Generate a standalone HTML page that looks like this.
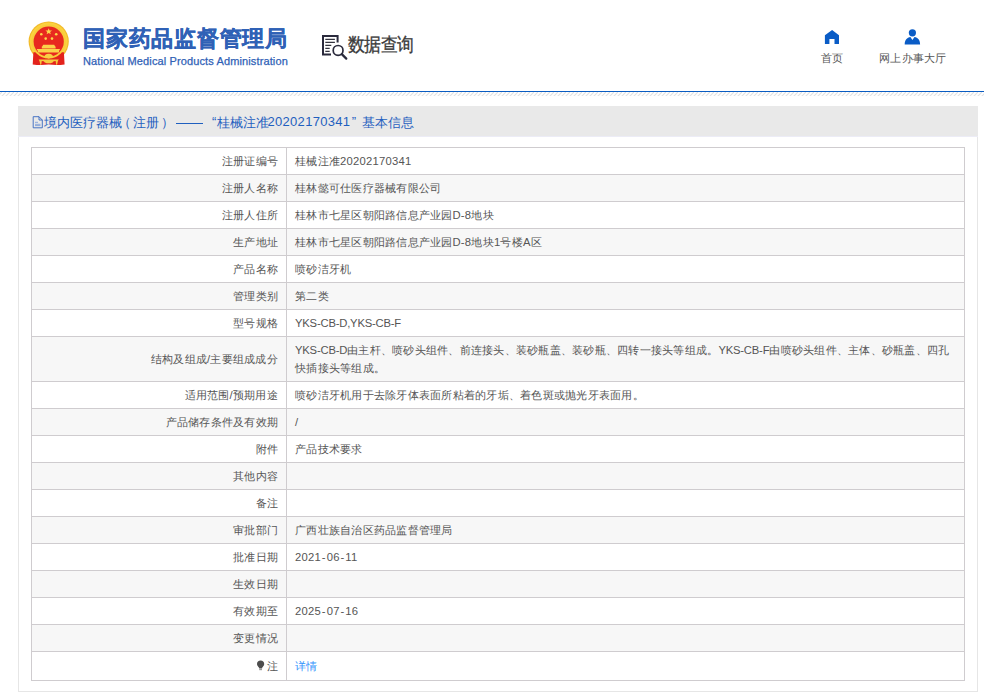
<!DOCTYPE html>
<html><head><meta charset="utf-8">
<style>
*{margin:0;padding:0;box-sizing:border-box}
html,body{width:984px;height:699px;overflow:hidden;background:#fff;font-family:"Liberation Sans",sans-serif;color:#555}
.abs{position:absolute}
.s{position:absolute;white-space:nowrap}
#bl{position:absolute;left:0;top:91px;width:984px;height:1px;background:#0a5cc2}
#hatch{position:absolute;left:0;top:92px;width:984px;height:4px}
.t1{left:83px;top:24px;font-size:22px;font-weight:bold;color:#2f61b6;letter-spacing:.75px;-webkit-text-stroke:.3px #2f61b6}
.t2{left:83px;top:55px;font-size:11px;color:#2f61b6;letter-spacing:.125px;-webkit-text-stroke:.25px #2f61b6}
.dq{left:348px;top:32px;font-size:17px;color:#3a3a3a;letter-spacing:-.6px;transform:scaleY(1.13);transform-origin:0 3px;-webkit-text-stroke:.3px #3a3a3a}
.nav{font-size:11.25px;letter-spacing:.25px;color:#555}
#panel{position:absolute;left:18px;top:106px;width:960px;height:586px;border:1px solid #e6e6e6;border-top:none}
#ph{position:absolute;left:18px;top:106px;width:960px;height:31px;background:#e9e9e9;border-bottom:1px solid #ececf6}
.pt{top:114px;font-size:13px;color:#1f5fbf}
table{position:absolute;left:31px;top:147px;width:934px;border-collapse:collapse;font-size:11.25px;letter-spacing:.25px;color:#555}
td{border:1px solid #cfcccf;height:27px;padding:0;vertical-align:middle;white-space:nowrap}
td.l{width:255px;text-align:right;padding-right:8px}
td.v{padding-left:8px;line-height:18px}
tr.g td{background:#f7f7f7}
.n{letter-spacing:-.2px}
.h{margin:0 .8px}
a{color:#3394fc;text-decoration:none}
</style></head><body>
<svg class="abs" style="left:20px;top:15px" width="70" height="60" viewBox="20 15 70 60">
  <circle cx="48.7" cy="41.5" r="20.1" fill="#f2b928"/>
  <circle cx="48.7" cy="41.5" r="19" fill="#fbd13e"/>
  <path d="M33.4 52.2 L32.7 64.4 Q40 65.6 48.7 64.6 Q57.4 65.6 64.6 64.4 L63.9 52.2 Z" fill="#e3231c"/>
  <circle cx="48.7" cy="41.5" r="17.1" fill="#f8cc3a"/>
  <circle cx="48.7" cy="41.6" r="15.1" fill="#e8291f"/>
  <polygon points="48.7,28.2 49.6,30.4 52,30.5 50.1,32 50.8,34.3 48.7,33 46.6,34.3 47.3,32 45.4,30.5 47.8,30.4" fill="#fcd84a"/>
  <circle cx="41.3" cy="34.3" r="1.3" fill="#fcd84a"/>
  <circle cx="56.2" cy="34.3" r="1.3" fill="#fcd84a"/>
  <circle cx="45.7" cy="38.6" r="1.3" fill="#fcd84a"/>
  <circle cx="52.0" cy="38.6" r="1.3" fill="#fcd84a"/>
  <path d="M43.2 44.7 H54.2 L55.2 46.6 H42.2 Z M41.8 46.6 H55.6 V48.4 H41.8Z M36.7 49 H60 L59.4 50.6 H37.3Z M38 50.6 H59 V52.4 H38Z" fill="#fbd24a"/>
  <path d="M44.3 56.6 Q45.3 53.6 48.7 53.8 Q52.1 53.6 53.1 56.6 Q50.7 58.5 48.7 58.4 Q46.7 58.5 44.3 56.6Z" fill="#f8cf45"/>
  <path d="M38.6 59.6 L58.8 59.6 L57.6 61.2 Q53.4 60.7 52.6 62.4 Q48.7 64.3 44.8 62.4 Q44 60.7 39.8 61.2 Z" fill="#f6cb40"/>
  <path d="M39.4 60.2 L41.9 60.2 L41.2 64.8 L40.3 64.8 Z M58 60.2 L55.5 60.2 L56.2 64.8 L57.1 64.8 Z" fill="#f3c63e"/>
</svg>
<div class="s t1">国家药品监督管理局</div>
<div class="s t2">National Medical Products Administration</div>
<svg class="abs" style="left:318px;top:30px" width="34" height="32" viewBox="0 0 34 32">
  <path d="M13 24.6 H5 V5.9 H19.6 V12.4" fill="none" stroke="#2a2a3c" stroke-width="2"/>
  <path d="M7.3 9.4 H16.9 M7.3 12.4 H16.9 M7.3 15.3 H13.3 M7.3 18.3 H11.7 M7.3 21.3 H11.7" stroke="#34343f" stroke-width="1.3"/>
  <circle cx="20.1" cy="20.4" r="4.9" fill="#fff" stroke="#2a2a3c" stroke-width="1.7"/>
  <path d="M23.8 24.1 L28.3 28.6" stroke="#2a2a3c" stroke-width="2.2" stroke-linecap="round"/>
</svg>
<div class="s dq">数据查询</div>
<svg class="abs" style="left:824px;top:29px" width="16" height="16" viewBox="0 0 16 16">
  <path d="M8.1 0.9 L15 6.3 V14.9 H10.5 V9.9 H5.4 V14.9 H0.9 V6.3 Z" fill="#0a5cc6"/>
</svg>
<div class="s nav" style="left:821px;top:51px">首页</div>
<svg class="abs" style="left:904px;top:29px" width="17" height="17" viewBox="0 0 17 17">
  <circle cx="8.4" cy="3.8" r="3.6" fill="#0a5cc6"/>
  <path d="M0.7 15.4 C0.7 11 3 8.5 6.4 8.0 L8.4 11 L10.5 8.0 C14 8.5 16.1 11 16.1 15.4 Z" fill="#0a5cc6"/>
</svg>
<div class="s nav" style="left:879px;top:51px">网上办事大厅</div>
<div id="bl"></div>
<svg id="hatch" width="984" height="4" viewBox="0 0 984 4">
  <defs><pattern id="hp" x="2" width="4" height="4" patternUnits="userSpaceOnUse"><path d="M-1 5 L5 -1 M3 5 L7 1" stroke="#e2e2e2" stroke-width="1.2"/></pattern></defs>
  <rect width="984" height="4" fill="url(#hp)"/>
</svg>

<div id="panel"></div>
<div id="ph"></div>
<svg class="abs" style="left:32px;top:116px" width="12" height="13" viewBox="0 0 12 13">
  <path d="M1.2 0.7 H7 L10.3 4 V11.8 H1.2 Z" fill="none" stroke="#3566c0" stroke-width=".9"/>
  <path d="M7 0.7 V4 H10.3" fill="none" stroke="#3566c0" stroke-width=".9"/>
  <path d="M3 6.3 H6 M3 8.3 H8.5 M3 9.6 H8.5" stroke="#7f9fd8" stroke-width=".9"/>
</svg>
<span class="s pt" style="left:43.5px">境内医疗器械</span>
<span class="s pt" style="left:118px">（</span>
<span class="s pt" style="left:133px">注册</span>
<span class="s pt" style="left:161px">）</span>
<div class="abs" style="left:176px;top:123px;width:27px;height:1px;background:#1f5fbf"></div>
<span class="s pt" style="left:212px">“</span>
<span class="s pt" style="left:216.5px">桂械注准</span>
<span class="s pt" style="left:267.5px;letter-spacing:.3px">20202170341</span>
<span class="s pt" style="left:351.8px">”</span>
<span class="s pt" style="left:361.8px">基本信息</span>

<table>
<tr><td class="l">注册证编号</td><td class="v">桂械注准20202170341</td></tr>
<tr class="g"><td class="l">注册人名称</td><td class="v">桂林懿可仕医疗器械有限公司</td></tr>
<tr><td class="l">注册人住所</td><td class="v">桂林市七星区朝阳路信息产业园D-8地块</td></tr>
<tr class="g"><td class="l">生产地址</td><td class="v">桂林市七星区朝阳路信息产业园D-8地块1号楼A区</td></tr>
<tr><td class="l">产品名称</td><td class="v">喷砂洁牙机</td></tr>
<tr class="g"><td class="l">管理类别</td><td class="v">第二类</td></tr>
<tr><td class="l">型号规格</td><td class="v"><span class="n">YKS-CB-D,YKS-CB-F</span></td></tr>
<tr class="g"><td class="l" style="height:45px">结构及组成/主要组成成分</td><td class="v"><span class="n">YKS-CB-D</span>由主杆、喷砂头组件、前连接头、装砂瓶盖、装砂瓶、四转一接头等组成。<span class="n">YKS-CB-F</span>由喷砂头组件、主体、砂瓶盖、四孔<br>快插接头等组成。</td></tr>
<tr><td class="l">适用范围/预期用途</td><td class="v">喷砂洁牙机用于去除牙体表面所粘着的牙垢、着色斑或抛光牙表面用。</td></tr>
<tr class="g"><td class="l">产品储存条件及有效期</td><td class="v">/</td></tr>
<tr><td class="l">附件</td><td class="v">产品技术要求</td></tr>
<tr class="g"><td class="l">其他内容</td><td class="v"></td></tr>
<tr><td class="l">备注</td><td class="v"></td></tr>
<tr class="g"><td class="l">审批部门</td><td class="v">广西壮族自治区药品监督管理局</td></tr>
<tr><td class="l">批准日期</td><td class="v">2021<span class="h">-</span>06<span class="h">-</span>11</td></tr>
<tr class="g"><td class="l">生效日期</td><td class="v"></td></tr>
<tr><td class="l">有效期至</td><td class="v">2025<span class="h">-</span>07<span class="h">-</span>16</td></tr>
<tr class="g"><td class="l">变更情况</td><td class="v"></td></tr>
<tr><td class="l" style="height:29px"><svg width="9" height="11" viewBox="0 0 9 11" style="vertical-align:-1px;margin-right:2px"><path d="M4.6 0.6 C6.8 0.6 8.2 2.1 8.2 4.1 C8.2 5.8 6.9 6.8 6.1 7.8 V8.6 H3.1 V7.8 C2.3 6.8 1 5.8 1 4.1 C1 2.1 2.4 0.6 4.6 0.6Z" fill="#4d4d4d"/><rect x="3.2" y="9" width="2.8" height="1.2" fill="#999"/></svg>注</td><td class="v"><a>详情</a></td></tr>
</table>
</body></html>
